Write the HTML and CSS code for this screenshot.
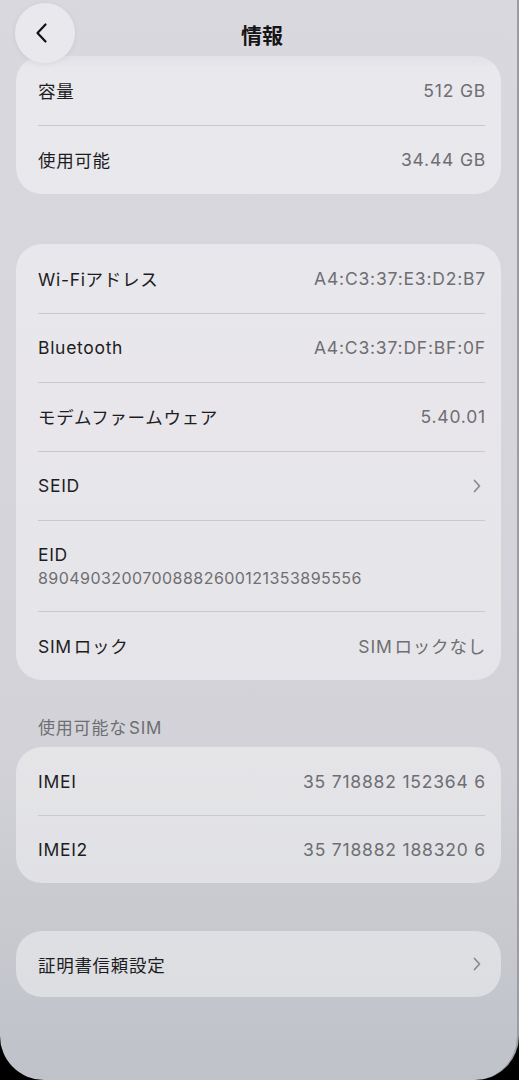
FILE: index.html
```html
<!DOCTYPE html>
<html lang="ja">
<head>
<meta charset="utf-8">
<title>情報</title>
<link rel="stylesheet" href="styles.css">
</head>
<body>
<div class="screen">
  <header class="nav">
    <div class="back">
      <svg width="16" height="22" viewBox="0 0 16 22"><path d="M11.5 2.5 L3.5 11 L11.5 19.5" fill="none" stroke="#111" stroke-width="2.2" stroke-linecap="round" stroke-linejoin="round"/></svg>
    </div>
    <div class="title">情報</div>
  </header>

  <section class="card first">
    <div class="row"><span class="label">容量</span><span class="value">512 GB</span></div>
    <div class="row"><span class="label">使用可能</span><span class="value">34.44 GB</span></div>
  </section>

  <section class="card gap">
    <div class="row"><span class="label">Wi-Fiアドレス</span><span class="value">A4:C3:37:E3:D2:B7</span></div>
    <div class="row"><span class="label">Bluetooth</span><span class="value">A4:C3:37:DF:BF:0F</span></div>
    <div class="row"><span class="label">モデムファームウェア</span><span class="value">5.40.01</span></div>
    <div class="row"><span class="label">SEID</span><span class="chev"><svg width="10" height="16" viewBox="0 0 10 16"><path d="M2.5 2.5 L7.5 8 L2.5 13.5" fill="none" stroke="#8a8a90" stroke-width="1.7" stroke-linecap="round" stroke-linejoin="round"/></svg></span></div>
    <div class="row tall"><span class="label">EID</span><span class="sub">89049032007008882600121353895556</span></div>
    <div class="row"><span class="label">SIM<span class="jsp"></span>ロック</span><span class="value">SIM<span class="jsp"></span>ロックなし</span></div>
  </section>

  <div class="section-title">使用可能な<span class="jsp"></span>SIM</div>
  <section class="card">
    <div class="row"><span class="label">IMEI</span><span class="value">35 718882 152364 6</span></div>
    <div class="row"><span class="label">IMEI2</span><span class="value">35 718882 188320 6</span></div>
  </section>

  <section class="card gap2">
    <div class="row short"><span class="label">証明書信頼設定</span><span class="chev"><svg width="10" height="16" viewBox="0 0 10 16"><path d="M2.5 2.5 L7.5 8 L2.5 13.5" fill="none" stroke="#8a8a90" stroke-width="1.7" stroke-linecap="round" stroke-linejoin="round"/></svg></span></div>
  </section>
</div>
</body>
</html>
```

FILE: styles.css
```css
* { box-sizing: border-box; }
html, body { margin: 0; padding: 0; background: #000; }
body {
  font-family: "Inter", "Noto Sans CJK JP", sans-serif;
  -webkit-font-smoothing: antialiased;
}
.screen {
  position: relative;
  width: 519px;
  height: 1080px;
  overflow: hidden;
  background: linear-gradient(180deg, #dad8df 0%, #d7d5dc 40%, #d2d2d8 70%, #c6c8ce 88%, #bfc2c9 100%);
  border-radius: 0 0 44px 44px;
  border-right: 2px solid #9c9da4;
  padding-top: 56px;
}
.nav {
  position: absolute;
  top: 0; left: 0; right: 0;
  height: 68px;
  display: flex;
  align-items: center;
  justify-content: center;
  background: linear-gradient(180deg, rgba(218,216,223,0.95) 0%, rgba(218,216,223,0.75) 70%, rgba(218,216,223,0) 100%);
  z-index: 2;
}
.back {
  position: absolute;
  left: 15px; top: 3px;
  width: 60px; height: 60px;
  border-radius: 50%;
  background: #e9e8ec;
  box-shadow: 0 1px 6px rgba(0,0,0,0.06);
  display: flex; align-items: center; justify-content: center;
  padding-right: 6px;
}
.title {
  font-size: 21px;
  font-weight: 700;
  color: #151515;
  padding-left: 7px;
}
.card {
  margin: 0 16px;
  background: rgba(255,255,255,0.42);
  border-radius: 26px;
  overflow: hidden;
}
.card.gap { margin-top: 50px; }
.card.gap2 { margin-top: 48px; }
.row {
  position: relative;
  height: 69px;
  display: flex;
  align-items: center;
  justify-content: space-between;
  padding: 0 15px 0 22px;
}
.row + .row::before {
  content: "";
  position: absolute;
  top: 0; left: 22px; right: 16px;
  height: 1px;
  background: #c9c8cd;
}
.row.tall {
  height: 91px;
  flex-direction: column;
  align-items: flex-start;
  justify-content: center;
  gap: 3px;
}
.card:not(.first):not(.gap) .row { height: 68px; }
.row.short { height: 66px !important; }
.label {
  font-size: 17.5px;
  color: #1d1d1f;
  letter-spacing: 0.7px;
}
.value {
  font-size: 17.5px;
  color: #6e6e73;
  letter-spacing: 0.8px;
}
.sub {
  font-size: 16px;
  color: #6e6e73;
  letter-spacing: 0.45px;
}
.jsp { display: inline-block; width: 2px; }
.chev { display: flex; align-items: center; margin-right: 4px; }
.section-title {
  margin: 38px 0 9px 38px;
  height: 20px;
  line-height: 20px;
  font-size: 17px;
  letter-spacing: 0.8px;
  color: #6e6e73;
}
```
